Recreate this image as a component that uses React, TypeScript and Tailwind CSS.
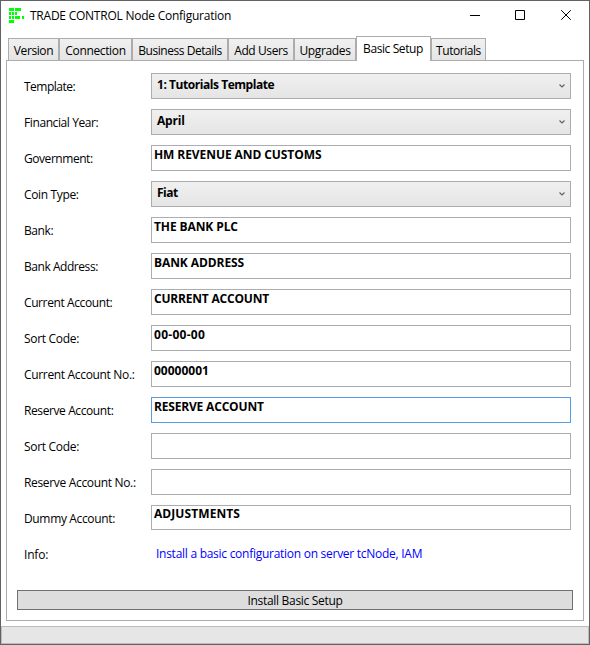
import { ReactNode } from "react";

const tabs = [
  { label: "Version", cls: "w-[51px] tracking-[-0.4px]" },
  { label: "Connection", cls: "w-[73px] tracking-[-0.35px]" },
  { label: "Business Details", cls: "w-[96px] tracking-[-0.45px]" },
  { label: "Add Users", cls: "w-[66px] tracking-[-0.4px]" },
  { label: "Upgrades", cls: "w-[62px] tracking-[-0.35px]" },
  { label: "Basic Setup", cls: "w-[75px] tracking-[-0.4px] pr-[1px]", active: true },
  { label: "Tutorials", cls: "w-[55px] tracking-[-0.45px]" },
];

type Field = { label: string; value: string; kind?: "select" | "focus"; lt: string; vt: string; box?: string };

const fields: Field[] = [
  { label: "Template:", value: "1: Tutorials Template", kind: "select", lt: "tracking-[-0.5px]", vt: "tracking-[-0.45px]" },
  { label: "Financial Year:", value: "April", kind: "select", lt: "tracking-[-0.4px]", vt: "tracking-[-0.2px]" },
  { label: "Government:", value: "HM REVENUE AND CUSTOMS", lt: "tracking-[-0.45px]", vt: "tracking-[-0.08px]" },
  { label: "Coin Type:", value: "Fiat", kind: "select", lt: "tracking-[-0.35px]", vt: "tracking-[-0.5px]" },
  { label: "Bank:", value: "THE BANK PLC", lt: "tracking-[-0.4px]", vt: "tracking-[-0.1px]" },
  { label: "Bank Address:", value: "BANK ADDRESS", lt: "tracking-[-0.45px]", vt: "tracking-[-0.08px]" },
  { label: "Current Account:", value: "CURRENT ACCOUNT", lt: "tracking-[-0.4px]", vt: "tracking-[-0.2px]" },
  { label: "Sort Code:", value: "00-00-00", lt: "tracking-[-0.3px]", vt: "tracking-[0.27px]" },
  { label: "Current Account No.:", value: "00000001", lt: "tracking-[-0.33px]", vt: "tracking-[0px]" },
  { label: "Reserve Account:", value: "RESERVE ACCOUNT", kind: "focus", lt: "tracking-[-0.4px]", vt: "tracking-[-0.18px]" },
  { label: "Sort Code:", value: "", lt: "tracking-[-0.3px]", vt: "" },
  { label: "Reserve Account No.:", value: "", lt: "tracking-[-0.33px]", vt: "" },
  { label: "Dummy Account:", value: "ADJUSTMENTS", lt: "tracking-[-0.35px]", vt: "tracking-[0.08px] leading-[16px]", box: "h-[25px]" },
];

function Logo() {
  return (
    <svg width="16" height="16" viewBox="0 0 16 16" fill="#00ff00" shapeRendering="crispEdges">
      <path d="M0 0h5v3H0zM6 0h6v3H6zM0 4h2v3H0zM3 4h2v3H3zM6 4h2v3H6zM0 8h2v3H0zM3 8h2v3H3zM6 8h5v3H6zM13 8h2v3h-2zM0 12h5v3H0z" />
    </svg>
  );
}

function Row({ label, lt, children }: { label: string; lt: string; children: ReactNode }) {
  return (
    <div className="flex h-[36px] items-start">
      <span className={`mt-[5px] w-[127px] shrink-0 leading-[18px] ${lt}`}>{label}</span>
      {children}
    </div>
  );
}

function Control({ f }: { f: Field }) {
  if (f.kind === "select") {
    return (
      <div className={`flex h-[26px] w-[420px] justify-between border border-[#acacac] bg-linear-to-b from-[#f0f0f0] to-[#e5e5e5] pl-[5px] font-bold ${f.vt}`}>
        <span className="mt-[2px] leading-[18px]">{f.value}</span>
        <svg className="mt-[10px] mr-[5px]" width="6" height="4" viewBox="0 0 6 4" fill="none" stroke="#606060" strokeWidth="1.1">
          <path d="M.5.5 3 3 5.5.5" />
        </svg>
      </div>
    );
  }
  return (
    <div className={`w-[420px] border bg-white pl-[2px] font-bold ${f.box ?? "h-[26px] leading-[18px]"} ${f.kind === "focus" ? "border-[#569de5]" : "border-[#abadb3]"} ${f.vt}`}>
      {f.value}
    </div>
  );
}

export default function App() {
  return (
    <div className="flex h-[645px] w-[590px] flex-col overflow-hidden border border-[#606266] bg-white font-['Open_Sans','Noto_Sans',sans-serif] text-[12px] whitespace-nowrap text-black">
      <header className="flex h-[35px] shrink-0 items-start pt-[7px] pl-[8px]">
        <Logo />
        <h1 className="ml-[5px] leading-[16px] tracking-[-0.24px]">TRADE CONTROL Node Configuration</h1>
        <svg className="mt-[1px] mr-[16px] ml-auto" width="103" height="12" viewBox="0 0 103 12" fill="none" stroke="#000">
          <path d="M0 6.5h10" />
          <path d="M45.5 1.5h9v9h-9z" />
          <path d="M91.2 1.2l9.6 9.6M100.8 1.2l-9.6 9.6" />
        </svg>
      </header>

      <nav className="z-10 -mb-px flex h-[25px] shrink-0 items-end pl-[7px]">
        {tabs.map((t) =>
          t.active ? (
            <div key={t.label} className={`h-[25px] border border-b-0 border-[#acacac] bg-white text-center leading-[24px] ${t.cls}`}>
              {t.label}
            </div>
          ) : (
            <div key={t.label} className={`h-[23px] border border-[#acacac] bg-linear-to-b from-[#f0f0f0] to-[#e5e5e5] text-center leading-[23px] ${t.cls}`}>
              {t.label}
            </div>
          )
        )}
      </nav>

      <main className="ml-[5px] flex h-[561px] w-[578px] shrink-0 flex-col border border-[#acacac] pt-[12px] pl-[17px]">
        {fields.map((f, i) => (
          <Row key={i} label={f.label} lt={f.lt}>
            <Control f={f} />
          </Row>
        ))}
        <Row label="Info:" lt="tracking-[-0.2px]">
          <span className="mt-[4px] ml-[5px] leading-[18px] tracking-[-0.27px] text-[#0000ff]">Install a basic configuration on server tcNode, IAM</span>
        </Row>
        <button className="mt-[13px] -ml-[7px] h-[20px] w-[556px] border border-[#707070] bg-[#dddddd] leading-[19px] tracking-[-0.3px]">
          Install Basic Setup
        </button>
      </main>

      <footer className="mt-[5px] h-[18px] shrink-0 border border-[#bcbcbc] bg-[#e6e6e6]" />
    </div>
  );
}
